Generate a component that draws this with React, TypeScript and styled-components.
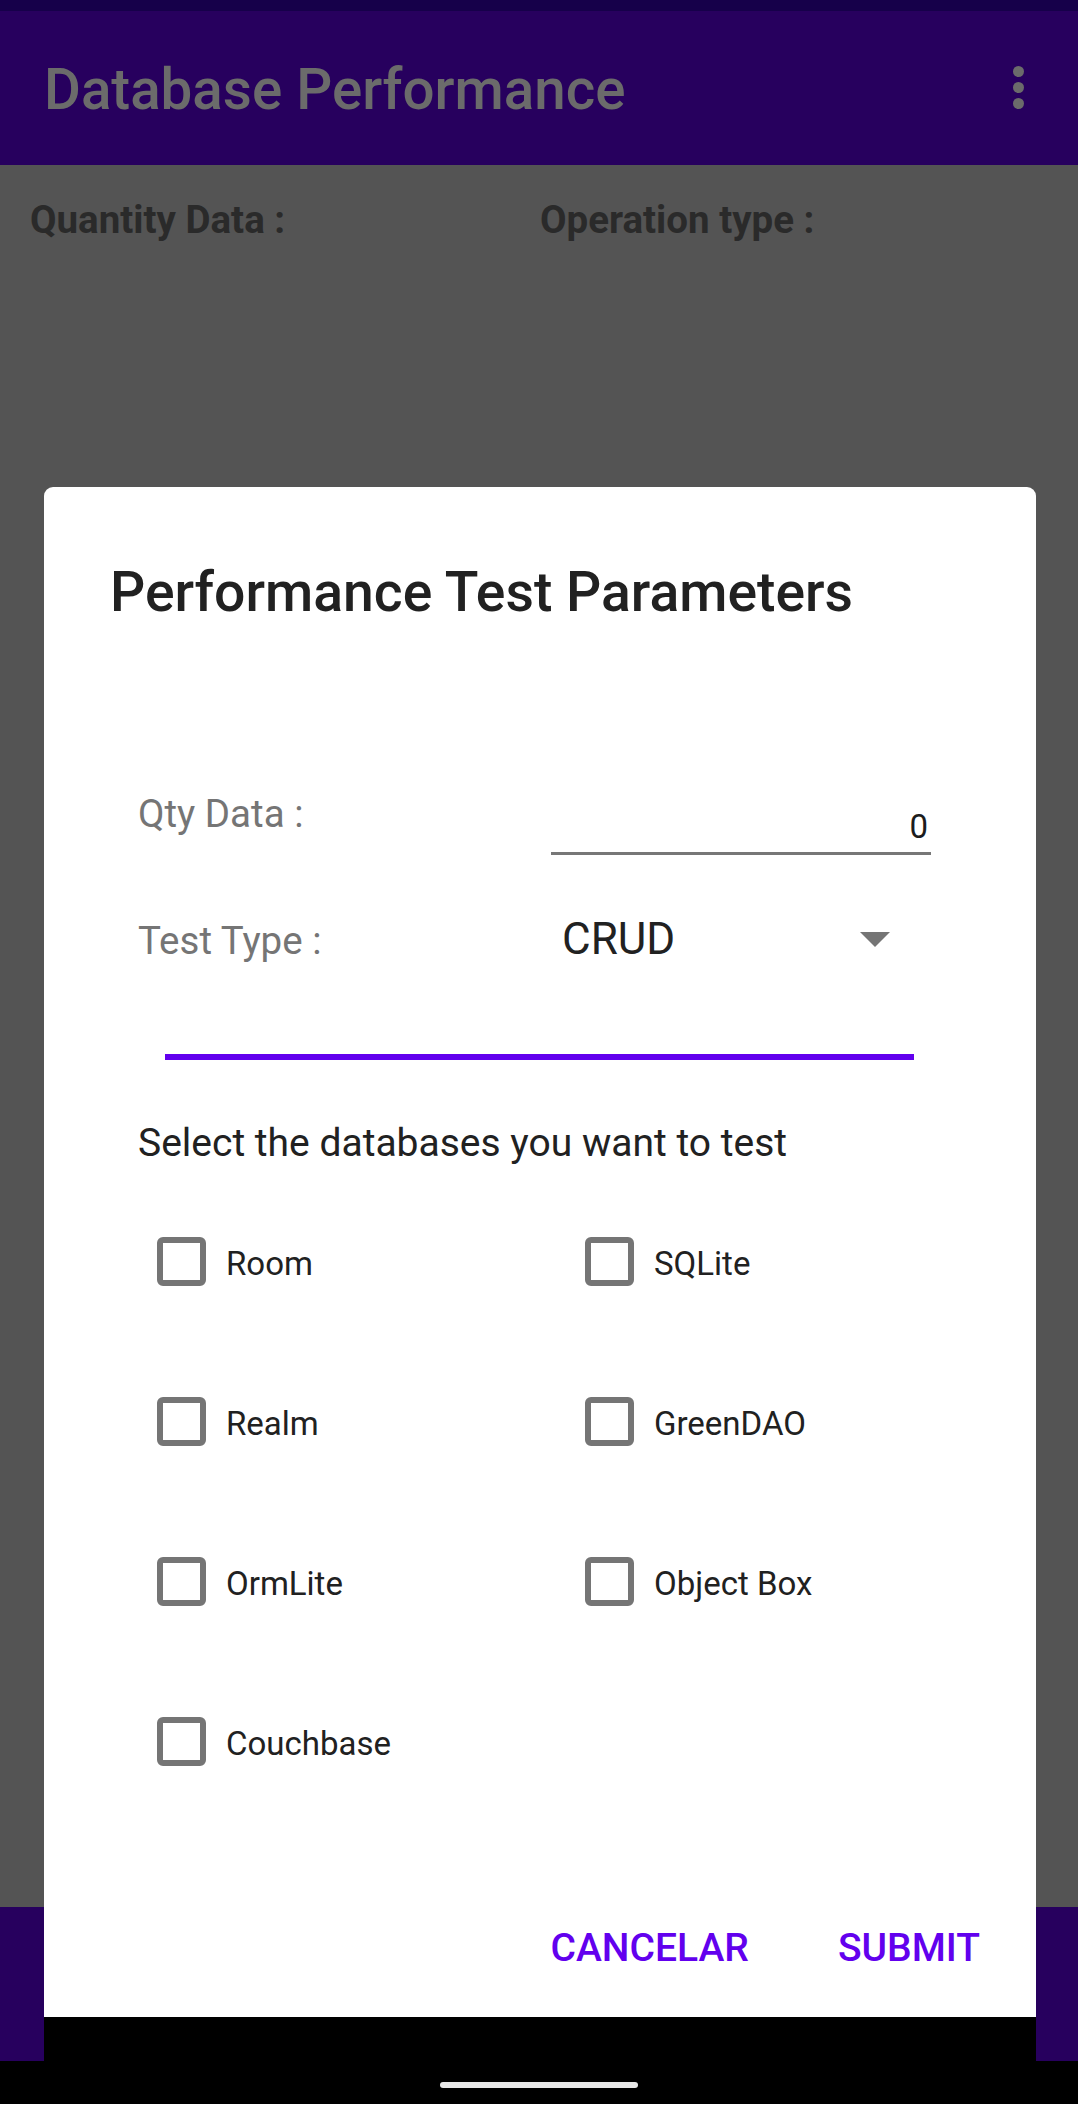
import React from "react";
import styled, { createGlobalStyle } from "styled-components";

const Global = createGlobalStyle`
  html, body { margin: 0; padding: 0; background: #000; }
  body { font-family: Roboto, "Noto Sans", "Liberation Sans", sans-serif; }
  * { box-sizing: border-box; }
`;

const Screen = styled.div`
  position: relative;
  width: 1078px;
  height: 2104px;
  display: flex;
  flex-direction: column;
  overflow: hidden;
`;

const StatusBar = styled.div`
  height: 11px;
  background: #16004a;
`;

const AppBar = styled.div`
  height: 154px;
  background: #27005e;
  display: flex;
  align-items: center;
  justify-content: space-between;
  padding: 0 54px 0 44px;
`;

const AppTitle = styled.h1`
  margin: 0;
  font-size: 56.5px;
  line-height: 64px;
  font-weight: 500;
  color: #6b6b6b;
  padding-top: 4px;
`;

const Overflow = styled.div`
  display: flex;
  flex-direction: column;
  gap: 5px;
  padding-bottom: 2px;
`;

const Dot = styled.span`
  width: 11px;
  height: 11px;
  border-radius: 50%;
  background: #6b6b6b;
`;

const Content = styled.div`
  flex: 1;
  background: #545454;
  display: grid;
  grid-template-columns: 510px 1fr;
  align-content: start;
  padding: 32px 0 0 30px;
`;

const BgLabel = styled.div`
  font-size: 38.5px;
  line-height: 46px;
  font-weight: 700;
  color: #2a2a2a;
`;

const BottomBar = styled.div`
  height: 154px;
  background: #27005e;
`;

const NavBar = styled.div`
  height: 43px;
  background: #000;
  display: flex;
  justify-content: center;
  padding-top: 21px;
`;

const HomePill = styled.span`
  width: 198px;
  height: 6px;
  border-radius: 3px;
  background: #e8e8e8;
`;

const DialogLayer = styled.div`
  position: absolute;
  top: 487px;
  left: 44px;
  width: 992px;
  height: 1574px;
  display: flex;
  flex-direction: column;
`;

const Panel = styled.div`
  height: 1530px;
  background: #fff;
  border-radius: 9px 9px 0 0;
  display: flex;
  flex-direction: column;
`;

const PanelInset = styled.div`
  flex: 1;
  background: #000;
`;

const DialogTitle = styled.h2`
  margin: 74px 0 0 66px;
  font-size: 55.3px;
  line-height: 64px;
  font-weight: 500;
  color: #212121;
`;

const Form = styled.div`
  display: flex;
  flex-direction: column;
  padding: 0 105px 0 94px;
`;

const FieldRow = styled.div<{ $top: number }>`
  display: grid;
  grid-template-columns: 413px 1fr;
  align-items: start;
  margin-top: ${(p) => p.$top}px;
`;

const FieldLabel = styled.div<{ $offset?: number }>`
  font-size: 38.5px;
  line-height: 46px;
  color: #757575;
  margin-top: ${(p) => p.$offset ?? 0}px;
`;

const NumberInput = styled.div`
  margin-top: 16px;
  font-size: 33px;
  line-height: 40px;
  color: #1c1c1c;
  text-align: right;
  padding: 0 3px 5px 0;
  border-bottom: 3px solid #777;
`;

const Spinner = styled.div`
  display: flex;
  align-items: center;
  justify-content: space-between;
  padding: 0 41px 0 11px;
`;

const SpinnerValue = styled.div`
  font-size: 44px;
  line-height: 52px;
  color: #212121;
`;

const Accent = styled.div`
  height: 6px;
  background: #6200ee;
  margin: 89px 17px 0 27px;
`;

const Prompt = styled.div`
  margin-top: 60px;
  font-size: 39px;
  line-height: 46px;
  color: #212121;
`;

const CheckGrid = styled.div`
  margin: 15px 0 0 19px;
  display: grid;
  grid-template-columns: 428px 1fr;
  grid-auto-rows: 160px;
`;

const CheckItem = styled.label`
  display: flex;
  align-items: center;
  gap: 20px;
`;

const Box = styled.span`
  width: 49px;
  height: 49px;
  border: 6px solid #757575;
  border-radius: 6px;
  flex: none;
`;

const CheckText = styled.span`
  font-size: 33px;
  line-height: 40px;
  color: #212121;
  padding-top: 5px;
`;

const Actions = styled.div`
  margin-top: 104px;
  display: flex;
  justify-content: flex-end;
  gap: 89px;
  padding-right: 56px;
`;

const ActionButton = styled.button`
  border: none;
  background: none;
  padding: 0;
  font-family: inherit;
  font-size: 39px;
  line-height: 46px;
  font-weight: 500;
  color: #6200ee;
`;

const databases = ["Room", "SQLite", "Realm", "GreenDAO", "OrmLite", "Object Box", "Couchbase"];

export default function App() {
  return (
    <Screen>
      <Global />
      <StatusBar />
      <AppBar>
        <AppTitle>Database Performance</AppTitle>
        <Overflow>
          <Dot />
          <Dot />
          <Dot />
        </Overflow>
      </AppBar>
      <Content>
        <BgLabel>Quantity Data :</BgLabel>
        <BgLabel>Operation type :</BgLabel>
      </Content>
      <BottomBar />
      <NavBar>
        <HomePill />
      </NavBar>

      <DialogLayer>
        <Panel>
          <DialogTitle>Performance Test Parameters</DialogTitle>
          <Form>
            <FieldRow $top={166}>
              <FieldLabel>Qty Data :</FieldLabel>
              <NumberInput>0</NumberInput>
            </FieldRow>
            <FieldRow $top={58}>
              <FieldLabel $offset={5}>Test Type :</FieldLabel>
              <Spinner>
                <SpinnerValue>CRUD</SpinnerValue>
                <svg width="30" height="15" viewBox="0 0 30 15">
                  <polygon points="0,0 30,0 15,15" fill="#757575" />
                </svg>
              </Spinner>
            </FieldRow>
            <Accent />
            <Prompt>Select the databases you want to test</Prompt>
            <CheckGrid>
              {databases.map((d) => (
                <CheckItem key={d}>
                  <Box />
                  <CheckText>{d}</CheckText>
                </CheckItem>
              ))}
            </CheckGrid>
          </Form>
          <Actions>
            <ActionButton>CANCELAR</ActionButton>
            <ActionButton>SUBMIT</ActionButton>
          </Actions>
        </Panel>
        <PanelInset />
      </DialogLayer>
    </Screen>
  );
}
